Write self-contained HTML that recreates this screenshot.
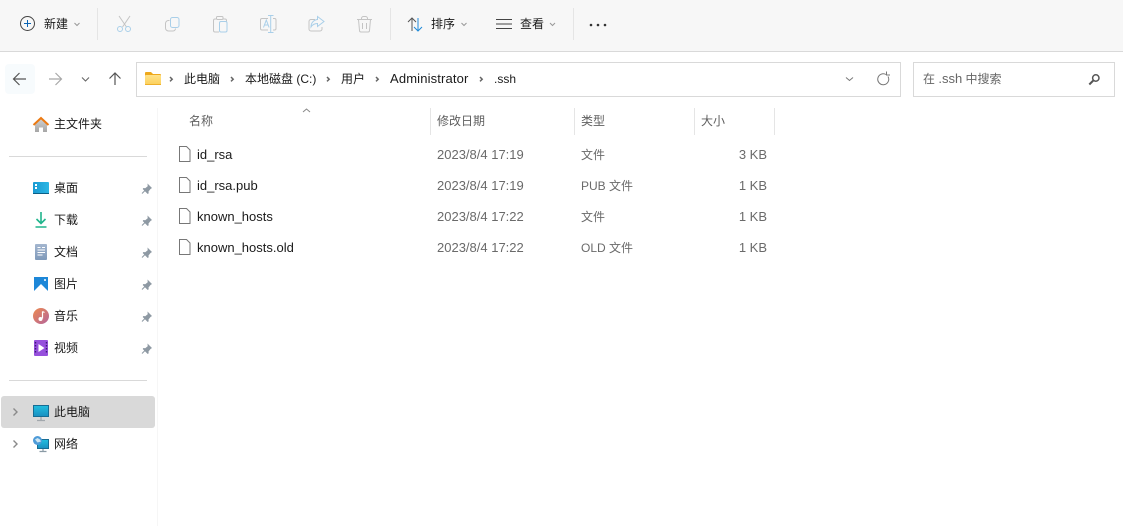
<!DOCTYPE html>
<html lang="zh"><head><meta charset="utf-8"><title>.ssh</title>
<style>
html,body{margin:0;padding:0;background:#fff}
#r{position:relative;width:1123px;height:526px;overflow:hidden;background:#fff;font-family:"Liberation Sans","Noto Sans CJK SC",sans-serif;font-size:12px;color:#1a1a1a}
#r div{position:absolute}
.t{line-height:16px;white-space:nowrap}
.l{font-size:13px}
.g{color:#6a6a6a}
.h{color:#5f5f5f}
svg{position:absolute;left:0;top:0}
</style></head><body><div id="r">
<div style="left:0;top:0;width:1123px;height:51px;background:#f7f7f7"></div>
<div style="left:0;top:51px;width:1123px;height:1px;background:#d9d9d9"></div>
<div style="left:97px;top:8px;width:1px;height:32px;background:#e5e5e5"></div>
<div style="left:390px;top:8px;width:1px;height:32px;background:#e5e5e5"></div>
<div style="left:573px;top:8px;width:1px;height:32px;background:#e5e5e5"></div>
<div style="left:5px;top:64px;width:30px;height:30px;background:#f7fbfd;border-radius:4px"></div>
<div style="left:136px;top:62px;width:763px;height:33px;border:1px solid #d9d9d9"></div>
<div style="left:913px;top:62px;width:200px;height:33px;border:1px solid #d9d9d9"></div>
<div style="left:9px;top:156px;width:138px;height:1px;background:#d9d9d9"></div>
<div style="left:9px;top:380px;width:138px;height:1px;background:#d9d9d9"></div>
<div style="left:1px;top:396px;width:154px;height:32px;background:#d9d9d9;border-radius:3px"></div>
<div style="left:157px;top:108px;width:1px;height:418px;background:#f6f6f6"></div>
<div style="left:430px;top:108px;width:1px;height:27px;background:#e5e5e5"></div>
<div style="left:574px;top:108px;width:1px;height:27px;background:#e5e5e5"></div>
<div style="left:694px;top:108px;width:1px;height:27px;background:#e5e5e5"></div>
<div style="left:774px;top:108px;width:1px;height:27px;background:#e5e5e5"></div>

<svg width="1123" height="526" viewBox="0 0 1123 526" fill="none">
<defs>
<linearGradient id="m" x1="0" y1="0" x2="1" y2="1"><stop offset="0" stop-color="#ee8a4e"/><stop offset="1" stop-color="#b4649c"/></linearGradient>
<linearGradient id="s" x1="0" y1="0" x2="0" y2="1"><stop offset="0" stop-color="#22bfe0"/><stop offset="1" stop-color="#1a8fc0"/></linearGradient>
<linearGradient id="d" x1="0" y1="0" x2="1" y2="0"><stop offset="0" stop-color="#1a9ad2"/><stop offset="1" stop-color="#2cb6e4"/></linearGradient>
<linearGradient id="f" x1="0" y1="0" x2="0" y2="1"><stop offset="0" stop-color="#ffe28a"/><stop offset="1" stop-color="#fcd05a"/></linearGradient>
<linearGradient id="c" x1="0" y1="0" x2="0" y2="1"><stop offset="0" stop-color="#a3b6cf"/><stop offset="1" stop-color="#7f99ba"/></linearGradient>
<linearGradient id="hm" x1="0" y1="0" x2="0" y2="1"><stop offset="0" stop-color="#d0d0d0"/><stop offset="1" stop-color="#a6a6a6"/></linearGradient>
</defs>
<!-- new -->
<circle cx="27.500" cy="23.500" r="7" stroke="#444"/>
<path d="M27.500 20v7M24 23.500h7" stroke="#0a64b4"/>
<path d="M74.500 23l2.500 2.500 2.500-2.500" stroke="#999"/>
<!-- cut -->
<path d="M119 16l7.500 11M130 16l-7.500 11" stroke="#c4c4c4"/>
<circle cx="120" cy="29" r="2.500" stroke="#a9cfe9"/><circle cx="128" cy="29" r="2.500" stroke="#a9cfe9"/>
<!-- copy -->
<path d="M169.500 20.500h-1a3 3 0 0 0-3 3v4.500a3 3 0 0 0 3 3h4.500a2.500 2.500 0 0 0 2.500-2.500" stroke="#c4c4c4"/>
<rect x="170.500" y="17.500" width="8.500" height="10" rx="2" stroke="#a9cfe9" fill="#f7f7f7"/>
<!-- paste -->
<path d="M216 19h-1a1.500 1.500 0 0 0-1.500 1.500v10a1.500 1.500 0 0 0 1.500 1.500h4M223 19h2a1.500 1.500 0 0 1 1.500 1.500v1" stroke="#c4c4c4"/>
<rect x="216.500" y="16.500" width="6.500" height="3" rx="1" stroke="#c4c4c4"/>
<rect x="219.500" y="21.500" width="7.500" height="10.500" rx="1.500" stroke="#a9cfe9" fill="#f7f7f7"/>
<!-- rename -->
<path d="M268 18.500h-6a1.500 1.500 0 0 0-1.500 1.500v8.500a1.500 1.500 0 0 0 1.500 1.500h6M273 18.500h1.500a1.500 1.500 0 0 1 1.500 1.500v8.500a1.500 1.500 0 0 1-1.500 1.500h-1.500" stroke="#c4c4c4"/>
<path d="M268 15.500h5.500M270.700 15.500v17M268 32.500h5.500" stroke="#a9cfe9"/>
<path d="M263.500 27.500l2.800-7.500 2.800 7.500M264.500 25h3.500" stroke="#a9cfe9"/>
<!-- share -->
<path d="M315 19.500h-4a2 2 0 0 0-2 2v7.500a2 2 0 0 0 2 2h9a2 2 0 0 0 2-2v-2" stroke="#c4c4c4"/>
<path d="M317.500 16.500l6.500 5-6.500 5v-3c-3 0-5 1-6.500 3.500 0-4 2.500-7 6.500-7.500z" stroke="#a9cfe9" fill="#f7f7f7"/>
<!-- delete -->
<path d="M357 19.500h15M361.500 19.500v-1a2 2 0 0 1 2-2h2a2 2 0 0 1 2 2v1M358.500 19.500l1 11a1.500 1.500 0 0 0 1.500 1.500h7a1.500 1.500 0 0 0 1.500-1.500l1-11M362.500 23v6M366.500 23v6" stroke="#c4c4c4"/>
<!-- sort -->
<path d="M412 31V18M408 22l4-4 4 4" stroke="#555"/>
<path d="M418 18v13M414 27l4 4 4-4" stroke="#1f8ad8"/>
<path d="M461.500 23l2.500 2.500 2.500-2.500" stroke="#999"/>
<!-- view -->
<path d="M496 19.500h16M496 24h16M496 28.500h16" stroke="#444"/>
<path d="M550 23l2.500 2.500 2.500-2.500" stroke="#999"/>
<circle cx="591" cy="25" r="1.300" fill="#333"/><circle cx="598" cy="25" r="1.300" fill="#333"/><circle cx="605" cy="25" r="1.300" fill="#333"/>
<!-- nav -->
<path d="M26 79H14M19.500 73l-6 6 6 6" stroke="#555" stroke-width="1.200"/>
<path d="M61 79H49M55.500 73l6 6-6 6" stroke="#a8a8a8" stroke-width="1.200"/>
<path d="M82 77.500l3.500 3.500 3.500-3.500" stroke="#666" stroke-width="1.100"/>
<path d="M115 85V73M109.500 78.500l5.500-5.500 5.500 5.500" stroke="#555" stroke-width="1.200"/>
<!-- address folder -->
<path d="M145 73a1 1 0 0 1 1-1h5l2 2h7a1 1 0 0 1 1 1v3h-16z" fill="#eea81b"/>
<rect x="145" y="75" width="16" height="10" rx="1" fill="url(#f)"/>
<path d="M145 84.500h16" stroke="#eeb02c"/>
<!-- breadcrumb chevrons -->
<g stroke="#666" stroke-width="1.500">
<path d="M170 77l2.200 2.200-2.200 2.200M231 77l2.200 2.200-2.200 2.200M327 77l2.200 2.200-2.200 2.200M376 77l2.200 2.200-2.200 2.200M480 77l2.200 2.200-2.200 2.200"/>
</g>
<path d="M846 77.500l3.500 3-0 0 3.500-3" stroke="#777"/>
<path d="M888 76.500a5.500 5.500 0 1 1-2-2M886.500 71.500v3.500h3.500" stroke="#777"/>
<!-- search -->
<circle cx="1095.800" cy="78" r="3.200" stroke="#555" stroke-width="1.500"/>
<path d="M1093.300 80.500l-4 4" stroke="#555" stroke-width="2"/>
<!-- sort caret -->
<path d="M303 112l3.500-3 3.500 3" stroke="#888"/>
<!-- home -->
<path d="M35 124v8h4v-4.500h4v4.500h4v-8l-6-5z" fill="url(#hm)"/>
<path d="M33.500 125l7.500-7 7.500 7" stroke="#ec7a12" stroke-width="2"/>
<!-- desktop -->
<rect x="33" y="182" width="16" height="12" rx="1" fill="url(#d)"/>
<path d="M33 193.500h16" stroke="#0b5f86"/>
<rect x="35" y="184" width="2" height="2" fill="#fff"/><rect x="35" y="187" width="2" height="2" fill="#fff"/>
<!-- download -->
<path d="M41 212v11M36.500 219l4.500 4.500 4.500-4.500" stroke="#20b48c" stroke-width="1.600"/>
<path d="M35.500 227h11" stroke="#20b48c" stroke-width="1.500"/>
<!-- docs -->
<rect x="35" y="244" width="12" height="16" rx="1" fill="url(#c)"/>
<path d="M37.500 247.500h3M42 247.500h3M37.500 250h7.500M37.500 252.500h7.500M37.500 255h5" stroke="#fff"/>
<!-- pictures -->
<rect x="34" y="277" width="14" height="14" fill="#1d87d8"/>
<path d="M34 291l7-7 7 7z" fill="#fff"/><circle cx="45" cy="280" r="1" fill="#fff"/>
<!-- music -->
<circle cx="41" cy="316" r="8" fill="url(#m)"/>
<path d="M42.500 311.500v7" stroke="#fff" stroke-width="1.200"/><circle cx="40.500" cy="319" r="2" fill="#fff"/><path d="M42.500 311.500l2 1" stroke="#fff"/>
<!-- video -->
<rect x="34" y="340" width="14" height="16" rx="1" fill="#9650dc"/>
<path d="M38.500 344v8l6-4z" fill="#fff"/>
<path d="M35.500 342v12M46.500 342v12" stroke="#3d1a78" stroke-width="1.400" stroke-dasharray="1.500 1.500"/>
<!-- PC -->
<rect x="33.500" y="405.500" width="15" height="11" fill="url(#s)" stroke="#176d94"/>
<path d="M41 417v3M37 420.500h8" stroke="#a2a8ad" stroke-width="1.300"/>
<!-- network -->
<rect x="37.500" y="439.500" width="11" height="9" fill="url(#s)" stroke="#176d94"/>
<path d="M43 449v2M39.500 451.500h7" stroke="#8a9aa5" stroke-width="1.200"/>
<circle cx="37.500" cy="440.500" r="4.500" fill="#4e9bd8"/>
<path d="M35 439.500l2.500-1.500 2.500 1.500 1 2-3.500 1z" fill="#cfe6f2"/>
<!-- expand -->
<path d="M13.500 408.500l3.500 3.500-3.500 3.500M13.500 440.500l3.500 3.500-3.500 3.500" stroke="#8a8a8a" stroke-width="1.400"/>
<!-- pins -->
<g fill="#8e99a3" stroke="#8e99a3" stroke-width="1.100">
<g id="p1"><path d="M147.500 183.500l4.500 4.500-1.500 1-2 2.500.2 1.800-1 .7-5-5 .7-1 1.800.2 2.500-2z" stroke="none"/><path d="M145 190.500l-3 3"/></g>
<g transform="translate(0 32)"><path d="M147.500 183.500l4.500 4.500-1.500 1-2 2.500.2 1.800-1 .7-5-5 .7-1 1.800.2 2.500-2z" stroke="none"/><path d="M145 190.500l-3 3"/></g>
<g transform="translate(0 64)"><path d="M147.500 183.500l4.500 4.500-1.500 1-2 2.500.2 1.800-1 .7-5-5 .7-1 1.800.2 2.500-2z" stroke="none"/><path d="M145 190.500l-3 3"/></g>
<g transform="translate(0 96)"><path d="M147.500 183.500l4.500 4.500-1.500 1-2 2.500.2 1.800-1 .7-5-5 .7-1 1.800.2 2.500-2z" stroke="none"/><path d="M145 190.500l-3 3"/></g>
<g transform="translate(0 128)"><path d="M147.500 183.500l4.500 4.500-1.500 1-2 2.500.2 1.800-1 .7-5-5 .7-1 1.800.2 2.500-2z" stroke="none"/><path d="M145 190.500l-3 3"/></g>
<g transform="translate(0 160)"><path d="M147.500 183.500l4.500 4.500-1.500 1-2 2.500.2 1.800-1 .7-5-5 .7-1 1.800.2 2.500-2z" stroke="none"/><path d="M145 190.500l-3 3"/></g>
</g>
<!-- files -->
<g stroke="#777" fill="#fff">
<path d="M179.500 146.500h7l3.500 3.500v11.500h-10.500z"/>
<path d="M179.500 177.500h7l3.500 3.500v11.500h-10.500z"/>
<path d="M179.500 208.500h7l3.500 3.500v11.500h-10.500z"/>
<path d="M179.500 239.500h7l3.500 3.500v11.500h-10.500z"/>
</g>
</svg>

<div class="t" style="left:44px;top:16px">新建</div>
<div class="t" style="left:431px;top:16px">排序</div>
<div class="t" style="left:520px;top:16px">查看</div>

<div class="t" style="left:184px;top:71px">此电脑</div>
<div class="t" style="left:245px;top:71px">本地磁盘 (C:)</div>
<div class="t" style="left:341px;top:71px">用户</div>
<div class="t l" style="left:390px;top:71px;letter-spacing:.15px">Administrator</div>
<div class="t" style="left:494px;top:71px">.ssh</div>
<div class="t" style="left:923px;top:71px;color:#666">在 <span class="l">.ssh</span> 中搜索</div>

<div class="t" style="left:54px;top:116px">主文件夹</div>
<div class="t" style="left:54px;top:180px">桌面</div>
<div class="t" style="left:54px;top:212px">下载</div>
<div class="t" style="left:54px;top:244px">文档</div>
<div class="t" style="left:54px;top:276px">图片</div>
<div class="t" style="left:54px;top:308px">音乐</div>
<div class="t" style="left:54px;top:340px">视频</div>
<div class="t" style="left:54px;top:404px">此电脑</div>
<div class="t" style="left:54px;top:436px">网络</div>

<div class="t h" style="left:189px;top:113px">名称</div>
<div class="t h" style="left:437px;top:113px">修改日期</div>
<div class="t h" style="left:581px;top:113px">类型</div>
<div class="t h" style="left:701px;top:113px">大小</div>

<div class="t l" style="left:197px;top:147px">id_rsa</div>
<div class="t l" style="left:197px;top:178px">id_rsa.pub</div>
<div class="t l" style="left:197px;top:209px">known_hosts</div>
<div class="t l" style="left:197px;top:240px">known_hosts.old</div>

<div class="t l g" style="left:437px;top:147px">2023/8/4 17:19</div>
<div class="t l g" style="left:437px;top:178px">2023/8/4 17:19</div>
<div class="t l g" style="left:437px;top:209px">2023/8/4 17:22</div>
<div class="t l g" style="left:437px;top:240px">2023/8/4 17:22</div>

<div class="t g" style="left:581px;top:147px">文件</div>
<div class="t g" style="left:581px;top:178px">PUB 文件</div>
<div class="t g" style="left:581px;top:209px">文件</div>
<div class="t g" style="left:581px;top:240px">OLD 文件</div>

<div class="t l g" style="right:356px;top:147px">3 KB</div>
<div class="t l g" style="right:356px;top:178px">1 KB</div>
<div class="t l g" style="right:356px;top:209px">1 KB</div>
<div class="t l g" style="right:356px;top:240px">1 KB</div>
</div></body></html>
